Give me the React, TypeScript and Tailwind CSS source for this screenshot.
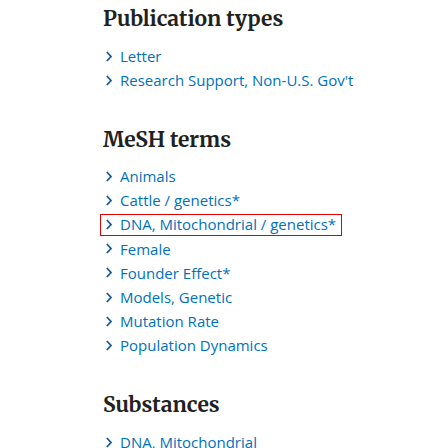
const pubTypes = ["Letter", "Research Support, Non-U.S. Gov't"];
const mesh = [
  "Animals",
  "Cattle / genetics*",
  "DNA, Mitochondrial / genetics*",
  "Female",
  "Founder Effect*",
  "Models, Genetic",
  "Mutation Rate",
  "Population Dynamics",
];

function Chevron() {
  return (
    <svg width="6" height="11" viewBox="0 0 6 11" className="shrink-0">
      <path d="M0.8 1L5 5.5L0.8 10" fill="none" stroke="#1a5a96" strokeWidth="1.8" />
    </svg>
  );
}

function Item({ label, boxed }: { label: string; boxed?: boolean }) {
  return (
    <li className="h-[24.15px] flex items-center">
      <span
        className={
          boxed
            ? "flex items-center gap-[8px] h-[22px] pl-[5px] pr-[5px] -ml-[3px] border border-[#e00000]"
            : "flex items-center gap-[8px] pl-[3px]"
        }
      >
        <Chevron />
        <span>{label}</span>
      </span>
    </li>
  );
}

function Heading({ children }: { children: string }) {
  return (
    <h2 className="text-[21px] font-bold text-[#212121] leading-[28px] font-['Merriweather','DejaVu_Serif',serif]">
      {children}
    </h2>
  );
}

export default function App() {
  return (
    <div className="w-[448px] h-[448px] overflow-hidden bg-white pl-[103px] pt-[5px] font-['Open_Sans',sans-serif] text-[15px] text-[#0071bc]">
      <Heading>Publication types</Heading>
      <ul className="mt-[11px]">
        {pubTypes.map((t) => (
          <Item key={t} label={t} />
        ))}
      </ul>
      <div className="mt-[34px]">
        <Heading>MeSH terms</Heading>
      </div>
      <ul className="mt-[10px]">
        {mesh.map((t) => (
          <Item key={t} label={t} boxed={t.startsWith("DNA")} />
        ))}
      </ul>
      <div className="mt-[34px]">
        <Heading>Substances</Heading>
      </div>
      <ul className="mt-[11px]">
        <Item label="DNA, Mitochondrial" />
      </ul>
    </div>
  );
}
